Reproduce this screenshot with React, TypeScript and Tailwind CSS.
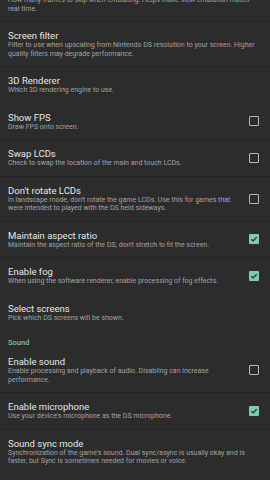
type Item = {
  title: string;
  desc: string;
  check?: boolean;
  line?: boolean;
};

function CheckBox({ checked }: { checked: boolean }) {
  if (checked) {
    return (
      <div className="flex h-[10px] w-[10px] items-center justify-center rounded-[1px] bg-[#7fc9b5]">
        <svg width="8" height="8" viewBox="0 0 8 8" fill="none">
          <path d="M1.3 4.2 L3.1 5.9 L6.7 2.2" stroke="#2c2c2c" strokeWidth="1.3" />
        </svg>
      </div>
    );
  }
  return <div className="h-[10px] w-[10px] rounded-[1px] border-[1.5px] border-[#b9b9b9]" />;
}

function SettingRow({ item }: { item: Item }) {
  const hasBox = item.check !== undefined;
  return (
    <div
      className={
        item.line === false
          ? "flex items-center border-b border-transparent py-[8px] pl-[8px] pr-[11px]"
          : "flex items-center border-b border-[#242424] py-[8px] pl-[8px] pr-[11px]"
      }
    >
      <div className={hasBox ? "flex-1 pr-[14px]" : "flex-1"}>
        <div className="text-[9.5px] leading-[11px] text-[#e6e6e6]">{item.title}</div>
        <div className="text-[7px] leading-[8.5px] text-[#a3a3a3]">{item.desc}</div>
      </div>
      {hasBox && <CheckBox checked={!!item.check} />}
    </div>
  );
}

const video: Item[] = [
  { title: "Frame skip", desc: "How many frames to skip when emulating. Helps make slow emulation match real time." },
  { title: "Screen filter", desc: "Filter to use when upscaling from Nintendo DS resolution to your screen. Higher quality filters may degrade performance." },
  { title: "3D Renderer", desc: "Which 3D rendering engine to use.", line: false },
  { title: "Show FPS", desc: "Draw FPS onto screen.", check: false },
  { title: "Swap LCDs", desc: "Check to swap the location of the main and touch LCDs.", check: false },
  { title: "Don't rotate LCDs", desc: "In landscape mode, don't rotate the game LCDs. Use this for games that were intended to played with the DS held sideways.", check: false },
  { title: "Maintain aspect ratio", desc: "Maintain the aspect ratio of the DS; don't stretch to fit the screen.", check: true },
  { title: "Enable fog", desc: "When using the software renderer, enable processing of fog effects.", check: true, line: false },
  { title: "Select screens", desc: "Pick which DS screens will be shown.", line: false },
];

const sound: Item[] = [
  { title: "Enable sound", desc: "Enable processing and playback of audio. Disabling can increase performance.", check: false },
  { title: "Enable microphone", desc: "Use your device's microphone as the DS microphone.", check: true },
  { title: "Sound sync mode", desc: "Synchronization of the game's sound. Dual sync/async is usually okay and is faster, but Sync is sometimes needed for movies or voice.", line: false },
];

export default function App() {
  return (
    <div className="h-[480px] w-[270px] overflow-hidden bg-[#2c2c2c] font-['Roboto',sans-serif]">
      <div className="-mt-[23px]">
        {video.map((it) => (
          <SettingRow key={it.title} item={it} />
        ))}
        <div className="pl-[8px] pt-[7px] text-[7.5px] font-medium leading-[10px] text-[#7fbfa8]">Sound</div>
        {sound.map((it) => (
          <SettingRow key={it.title} item={it} />
        ))}
      </div>
    </div>
  );
}
